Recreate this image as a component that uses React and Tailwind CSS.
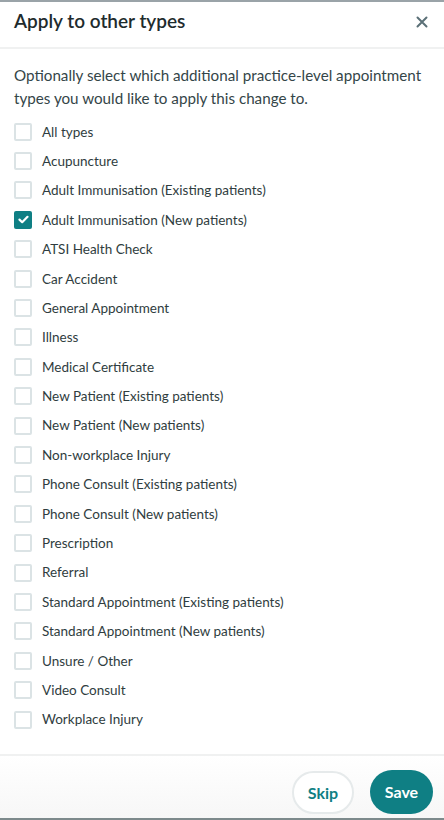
import React from 'react';

const types = [
  'All types',
  'Acupuncture',
  'Adult Immunisation (Existing patients)',
  'Adult Immunisation (New patients)',
  'ATSI Health Check',
  'Car Accident',
  'General Appointment',
  'Illness',
  'Medical Certificate',
  'New Patient (Existing patients)',
  'New Patient (New patients)',
  'Non-workplace Injury',
  'Phone Consult (Existing patients)',
  'Phone Consult (New patients)',
  'Prescription',
  'Referral',
  'Standard Appointment (Existing patients)',
  'Standard Appointment (New patients)',
  'Unsure / Other',
  'Video Consult',
  'Workplace Injury',
];

const Checkbox = ({ checked }) =>
  checked ? (
    <span className="w-[18px] h-[18px] rounded-[2px] bg-[#0f7f84] flex items-center justify-center shrink-0">
      <svg width="11" height="9" viewBox="0 0 11 9" fill="none">
        <path d="M1.5 4.6 L4.2 7.2 L9.5 1.8" stroke="white" strokeWidth="2.2" strokeLinecap="round" strokeLinejoin="round" />
      </svg>
    </span>
  ) : (
    <span className="w-[18px] h-[18px] rounded-[2px] border-2 border-[#dbe3e5] bg-white shrink-0" />
  );

export default function App() {
  const selected = 'Adult Immunisation (New patients)';

  return (
    <div className="w-[444px] h-[820px] bg-white flex flex-col border-t-2 border-[#9aa3a8] border-b-2 border-b-[#7d8a8c] font-['Lato','Liberation_Sans',sans-serif] text-[#2f3d40]">
      {/* Header */}
      <div className="h-[47px] shrink-0 flex items-center justify-between pl-[14px] pr-[16px] pb-[6px] border-b-2 border-[#f0f1f1]">
        <h2 className="text-[19px] font-semibold text-[#1e2b2d]">Apply to other types</h2>
        <button className="text-[#5b7077]">
          <svg width="12" height="12" viewBox="0 0 12 12">
            <path d="M1.5 1.5 L10.5 10.5 M10.5 1.5 L1.5 10.5" stroke="currentColor" strokeWidth="2" strokeLinecap="round" />
          </svg>
        </button>
      </div>

      {/* Body */}
      <div className="flex-1 pl-[14px] pr-[14px] pt-[15px]">
        <p className="text-[15.2px] leading-[23px] text-[#344548]">
          Optionally select which additional practice-level appointment types you would like to apply this change to.
        </p>
        <div className="mt-[7px] flex flex-col">
          {types.map((t) => (
            <label key={t} className="h-[29.4px] flex items-center gap-[10px]">
              <Checkbox checked={t === selected} />
              <span className="text-[13.5px] text-[#2f3d40]">{t}</span>
            </label>
          ))}
        </div>
      </div>

      {/* Footer */}
      <div className="h-[64px] shrink-0 border-t-2 border-[#f0f1f1] flex items-end justify-end gap-[16px] pr-[11px] pb-[4px] bg-gradient-to-b from-white to-[#f7f7f7]">
        <button className="w-[62px] h-[43px] rounded-full border-2 border-[#e6eaeb] bg-white text-[#0f7f84] text-[16px] font-bold">
          Skip
        </button>
        <button className="w-[63px] h-[44px] rounded-full bg-[#0f7f84] text-white text-[16px] font-bold">
          Save
        </button>
      </div>
    </div>
  );
}
